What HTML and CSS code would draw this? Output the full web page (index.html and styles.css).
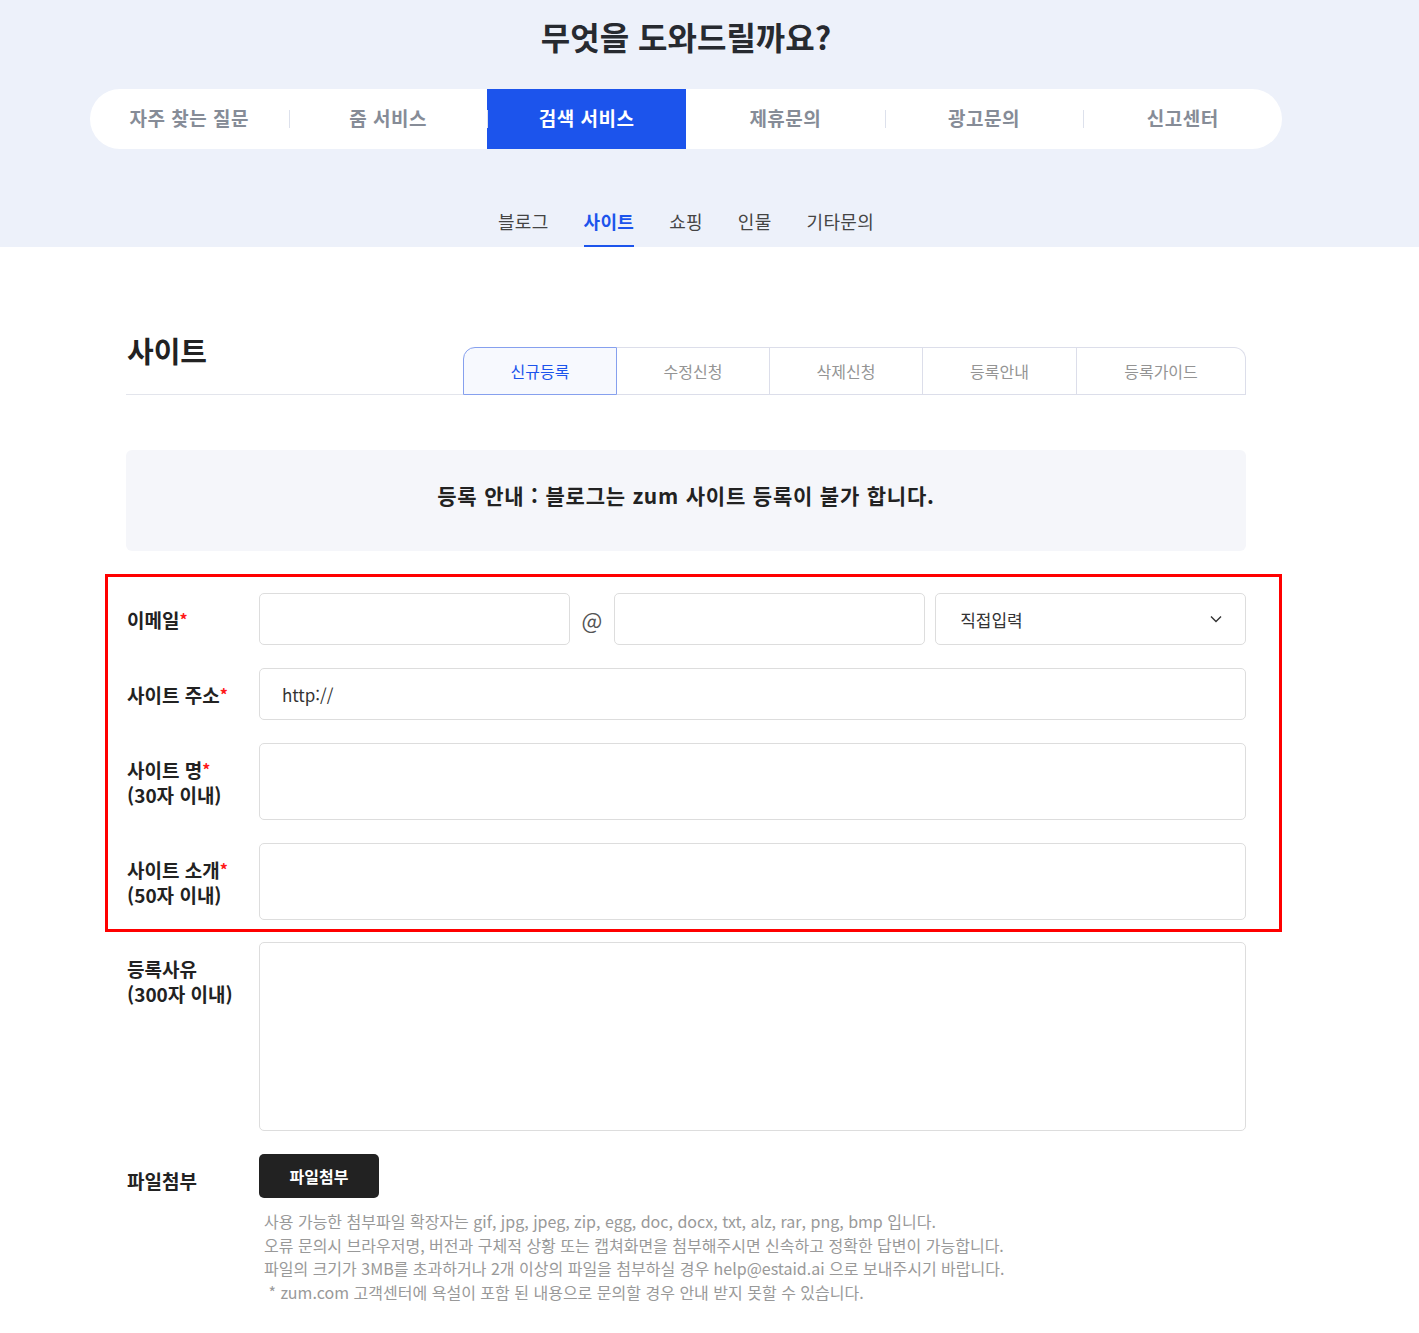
FILE: index.html
```
<!DOCTYPE html>
<html lang="ko">
<head>
  <meta charset="UTF-8" />
  <meta name="viewport" content="width=device-width, initial-scale=1.0" />
  <title>고객센터 - 사이트 등록</title>
  <link rel="stylesheet" href="styles.css">
</head>
<body>
  <div class="top">
    <div class="inner">
      <h1>무엇을 도와드릴까요?</h1>
      <ul class="main-nav">
        <li><a href="#">자주 찾는 질문</a></li>
        <li><a href="#">줌 서비스</a></li>
        <li class="on"><a href="#">검색 서비스</a></li>
        <li><a href="#">제휴문의</a></li>
        <li><a href="#">광고문의</a></li>
        <li><a href="#">신고센터</a></li>
      </ul>
      <ul class="sub-nav">
        <li><a href="#">블로그</a></li>
        <li class="on"><a href="#">사이트</a></li>
        <li><a href="#">쇼핑</a></li>
        <li><a href="#">인물</a></li>
        <li><a href="#">기타문의</a></li>
      </ul>
    </div>
  </div>

  <div class="inner">
    <div class="content">
      <div class="title-row">
        <h2>사이트</h2>
        <ul class="tabs">
          <li class="on"><a href="#">신규등록</a></li>
          <li><a href="#">수정신청</a></li>
          <li><a href="#">삭제신청</a></li>
          <li><a href="#">등록안내</a></li>
          <li><a href="#">등록가이드</a></li>
        </ul>
      </div>

      <div class="notice">등록 안내 : 블로그는 zum 사이트 등록이 불가 합니다.</div>

      <form class="reg-form">
        <div class="highlight">
          <div class="row">
            <label class="lbl">이메일<em>*</em></label>
            <div class="email">
              <input type="text" />
              <span class="at">@</span>
              <input type="text" />
              <div class="select">
                <span>직접입력</span>
                <svg width="14" height="14" viewBox="0 0 14 14"><path d="M2 4.5 L7 9.5 L12 4.5" fill="none" stroke="#333" stroke-width="1.4"/></svg>
              </div>
            </div>
          </div>
          <div class="row">
            <label class="lbl">사이트 주소<em>*</em></label>
            <input type="text" value="http://" />
          </div>
          <div class="row">
            <label class="lbl">사이트 명<em>*</em><br>(30자 이내)</label>
            <textarea class="short"></textarea>
          </div>
          <div class="row">
            <label class="lbl">사이트 소개<em>*</em><br>(50자 이내)</label>
            <textarea class="short"></textarea>
          </div>
        </div>
        <div class="row">
          <label class="lbl">등록사유<br>(300자 이내)</label>
          <textarea class="tall"></textarea>
        </div>
        <div class="row file-row">
          <label class="lbl">파일첨부</label>
          <button type="button">파일첨부</button>
        </div>
        <div class="notes">
          <p>사용 가능한 첨부파일 확장자는 gif, jpg, jpeg, zip, egg, doc, docx, txt, alz, rar, png, bmp 입니다.</p>
          <p>오류 문의시 브라우저명, 버전과 구체적 상황 또는 캡쳐화면을 첨부해주시면 신속하고 정확한 답변이 가능합니다.</p>
          <p>파일의 크기가 3MB를 초과하거나 2개 이상의 파일을 첨부하실 경우 help@estaid.ai 으로 보내주시기 바랍니다.</p>
          <p>&nbsp;* zum.com 고객센터에 욕설이 포함 된 내용으로 문의할 경우 안내 받지 못할 수 있습니다.</p>
        </div>
      </form>
    </div>
  </div>
</body>
</html>
```

FILE: styles.css
```
* {
  box-sizing: border-box;
}
body {
  margin: 0;
  font-family: "Noto Sans CJK KR", "Noto Sans", sans-serif;
  color: #222;
  background: #fff;
}
ul {
  list-style: none;
  margin: 0;
  padding: 0;
}
a {
  color: inherit;
  text-decoration: none;
}
.inner {
  width: 1372px;
}
.top {
  background: #edf1fa;
  height: 247px;
}
h1 {
  margin: 0;
  padding-top: 13px;
  height: 89px;
  text-align: center;
  font-size: 32px;
  font-weight: 700;
  line-height: 46px;
  color: #272a30;
}
.main-nav {
  display: flex;
  width: 1192px;
  height: 60px;
  margin: 0 auto;
  background: #fff;
  border-radius: 30px;
  overflow: hidden;
}
.main-nav li {
  flex: 1;
  position: relative;
  display: flex;
  align-items: center;
  justify-content: center;
  padding-bottom: 4px;
  font-size: 19px;
  font-weight: 700;
  letter-spacing: 0.5px;
  color: #868c97;
}
.main-nav li + li::before {
  content: "";
  position: absolute;
  left: 0;
  top: 21px;
  height: 18px;
  border-left: 1px solid #dde1ec;
}
.main-nav li.on {
  background: #1c54ec;
  color: #fff;
}
.main-nav li.on + li::before {
  display: none;
}
.sub-nav {
  display: flex;
  justify-content: center;
  gap: 35px;
  margin-top: 57px;
  font-size: 18px;
  letter-spacing: 0.3px;
  color: #444;
}
.sub-nav li a {
  display: block;
  height: 41px;
  line-height: 31px;
}
.sub-nav li.on a {
  color: #1c54ec;
  font-weight: 700;
  border-bottom: 2px solid #1c54ec;
}
.content {
  width: 1120px;
  margin: 0 auto;
  padding-top: 88px;
}
.title-row {
  display: flex;
  align-items: flex-start;
  justify-content: space-between;
  border-bottom: 1px solid #e3e5ec;
}
h2 {
  margin: 0;
  padding-left: 1px;
  font-size: 29px;
  font-weight: 700;
  line-height: 30px;
  color: #222;
}
.tabs {
  display: grid;
  grid-template-columns: 154px 153px 153px 154px 169px;
  margin-top: 12px;
  margin-bottom: -1px;
}
.tabs li a {
  display: block;
  height: 48px;
  line-height: 47px;
  text-align: center;
  font-size: 16px;
  color: #949494;
  border: 1px solid #dcdeea;
  border-left: none;
}
.tabs li:first-child a {
  border-left: 1px solid #dcdeea;
  border-top-left-radius: 12px;
}
.tabs li:last-child a {
  border-top-right-radius: 12px;
}
.tabs li.on a {
  color: #1c54ec;
  background: #f7f9fe;
  border: 1px solid #86a0ee;
}
.notice {
  margin-top: 55px;
  height: 101px;
  padding-bottom: 12px;
  background: #f5f6fa;
  border-radius: 6px;
  display: flex;
  align-items: center;
  justify-content: center;
  font-size: 21px;
  font-weight: 700;
  letter-spacing: 0.8px;
  color: #222;
}
.reg-form {
  margin-top: 23px;
}
.highlight {
  margin: 0 -36px 0 -21px;
  padding: 16px 33px 9px 18px;
  border: 3px solid #ff0000;
}
.row {
  display: flex;
  align-items: flex-start;
  margin-bottom: 23px;
}
.highlight .row:last-child {
  margin-bottom: 0;
}
.highlight + .row {
  margin-top: 10px;
}
.lbl {
  flex: 0 0 133px;
  padding: 14px 0 0 1px;
  font-size: 19px;
  font-weight: 700;
  line-height: 25px;
  color: #222;
}
.lbl em {
  font-style: normal;
  color: #ff1a1a;
  font-size: 16px;
  vertical-align: top;
}
input, textarea, .select {
  flex: 1;
  min-width: 0;
  height: 52px;
  padding: 0 22px;
  border: 1px solid #dddddd;
  border-radius: 5px;
  font-family: inherit;
  font-size: 17px;
  color: #333;
  background: #fff;
}
textarea {
  resize: none;
}
textarea.short {
  height: 77px;
}
textarea.tall {
  height: 189px;
}
.email {
  flex: 1;
  display: grid;
  grid-template-columns: 1fr 23px 1fr 1fr;
  column-gap: 10.5px;
  align-items: center;
}
.at {
  font-size: 22px;
  color: #555;
  text-align: center;
}
.select {
  display: flex;
  align-items: center;
  justify-content: space-between;
  padding: 0 22px 0 24px;
}
.file-row {
  margin-bottom: 12px;
}
.file-row .lbl {
  padding-top: 14px;
}
button {
  width: 120px;
  height: 44px;
  background: #222;
  color: #fff;
  border: none;
  border-radius: 5px;
  font-family: inherit;
  font-size: 16px;
  font-weight: 700;
  cursor: pointer;
}
.notes {
  padding-left: 138px;
  font-size: 16px;
  line-height: 23.5px;
  color: #999;
}
.notes p {
  margin: 0;
}
```
